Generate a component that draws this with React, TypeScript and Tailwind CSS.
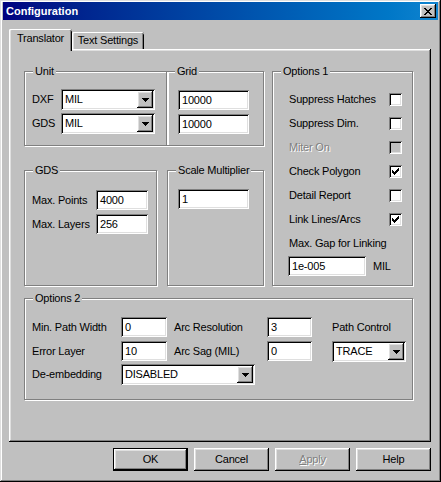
import React from "react";

const RAISED =
  "shadow-[inset_-1px_-1px_0_#000,inset_1px_1px_0_#fff,inset_-2px_-2px_0_#808080,inset_2px_2px_0_#dfdfdf]";
const SUNKEN =
  "shadow-[inset_1px_1px_0_#808080,inset_-1px_-1px_0_#fff,inset_2px_2px_0_#000,inset_-2px_-2px_0_#dfdfdf]";
const DISABLED_TEXT = "text-[#808080] [text-shadow:1px_1px_0_#fff]";

function Pixels({ w, h, rects }: { w: number; h: number; rects: number[][] }) {
  return (
    <svg width={w} height={h} viewBox={`0 0 ${w} ${h}`} shapeRendering="crispEdges" className="block">
      {rects.map((r, i) => (
        <rect key={i} x={r[0]} y={r[1]} width={r[2]} height={r[3]} fill="#000" />
      ))}
    </svg>
  );
}

const Arrow = () => (
  <Pixels w={7} h={4} rects={[[0, 0, 7, 1], [1, 1, 5, 1], [2, 2, 3, 1], [3, 3, 1, 1]]} />
);

const Check = () => (
  <Pixels
    w={7}
    h={7}
    rects={[
      [6, 0, 1, 1],
      [5, 1, 2, 1],
      [0, 2, 1, 1],
      [4, 2, 3, 1],
      [0, 3, 2, 1],
      [3, 3, 3, 1],
      [0, 4, 5, 1],
      [1, 5, 3, 1],
      [2, 6, 1, 1],
    ]}
  />
);

const CloseX = () => (
  <Pixels
    w={8}
    h={7}
    rects={[
      [0, 0, 2, 1],
      [6, 0, 2, 1],
      [1, 1, 2, 1],
      [5, 1, 2, 1],
      [2, 2, 4, 1],
      [3, 3, 2, 1],
      [2, 4, 4, 1],
      [1, 5, 2, 1],
      [5, 5, 2, 1],
      [0, 6, 2, 1],
      [6, 6, 2, 1],
    ]}
  />
);

function Group({
  label,
  className,
  children,
}: {
  label: string;
  className: string;
  children?: React.ReactNode;
}) {
  return (
    <div
      className={`relative border border-[#808080] shadow-[inset_1px_1px_0_#fff,1px_1px_0_#fff] ${className}`}
    >
      <span className="absolute left-[8px] top-[-7px] bg-[#c0c0c0] px-[2px] leading-[13px] whitespace-nowrap">
        {label}
      </span>
      {children}
    </div>
  );
}

function Field({ value, className }: { value: string; className: string }) {
  return (
    <div className={`flex h-[20px] shrink-0 items-center bg-white pl-[4px] ${SUNKEN} ${className}`}>
      {value}
    </div>
  );
}

function Combo({ value, className }: { value: string; className: string }) {
  return (
    <div className={`flex h-[21px] shrink-0 items-stretch bg-white p-[2px] ${SUNKEN} ${className}`}>
      <span className="flex flex-1 items-center pl-[2px]">{value}</span>
      <span className={`flex w-[16px] items-center justify-center bg-[#c0c0c0] ${RAISED}`}>
        <Arrow />
      </span>
    </div>
  );
}

function CheckBox({ checked, disabled }: { checked?: boolean; disabled?: boolean }) {
  return (
    <span
      className={`flex h-[13px] w-[13px] shrink-0 items-center justify-center ${SUNKEN} ${
        disabled ? "bg-[#c0c0c0]" : "bg-white"
      }`}
    >
      {checked && <Check />}
    </span>
  );
}

function Button({
  children,
  isDefault,
}: {
  children: React.ReactNode;
  isDefault?: boolean;
}) {
  return (
    <div
      className={`flex h-[23px] w-[75px] items-center justify-center bg-[#c0c0c0] ${
        isDefault
          ? "shadow-[inset_0_0_0_1px_#000,inset_-2px_-2px_0_#000,inset_2px_2px_0_#fff,inset_-3px_-3px_0_#808080,inset_3px_3px_0_#dfdfdf]"
          : RAISED
      }`}
    >
      {children}
    </div>
  );
}

const options1: { label: string; checked?: boolean; disabled?: boolean }[] = [
  { label: "Suppress Hatches" },
  { label: "Suppress Dim." },
  { label: "Miter On", disabled: true },
  { label: "Check Polygon", checked: true },
  { label: "Detail Report" },
  { label: "Link Lines/Arcs", checked: true },
];

export default function App() {
  return (
    <div className="h-[482px] w-[441px] overflow-hidden bg-[#c0c0c0] px-[3px] pt-[2px] font-['Liberation_Sans',Arial,sans-serif] text-[11px] leading-[13px] tracking-[-0.2px] text-black shadow-[inset_-1px_-1px_0_#000,inset_1px_1px_0_#dfdfdf,inset_-2px_-2px_0_#808080,inset_2px_2px_0_#fff]">
      {/* Title bar */}
      <div className="flex h-[18px] items-center bg-linear-to-r from-[#000080] to-[#1084d0] pl-[3px] pr-[2px]">
        <span className="text-[11px] font-bold tracking-normal text-white">Configuration</span>
        <span className={`ml-auto flex h-[14px] w-[16px] items-center justify-center bg-[#c0c0c0] ${RAISED}`}>
          <CloseX />
        </span>
      </div>

      <div className="pl-[6px]">
        {/* Tabs */}
        <div className="mt-[9px] flex h-[20px] items-end">
          <div className="relative z-10 -mb-[2px] flex h-[22px] w-[63px] justify-center rounded-t-[2px] bg-[#c0c0c0] pt-[3px] shadow-[inset_1px_0_0_#fff,inset_0_1px_0_#fff,inset_-1px_0_0_#000,inset_-2px_0_0_#808080,inset_2px_0_0_#dfdfdf]">
            Translator
          </div>
          <div className="flex h-[17px] w-[72px] justify-center rounded-t-[2px] bg-[#c0c0c0] pt-[2px] shadow-[inset_1px_0_0_#fff,inset_0_1px_0_#fff,inset_-1px_0_0_#000,inset_-2px_0_0_#808080,inset_2px_0_0_#dfdfdf]">
            Text Settings
          </div>
        </div>

        {/* Tab panel */}
        <div className={`h-[393px] w-[422px] bg-[#c0c0c0] pl-[15px] pt-[22px] ${RAISED}`}>
          <div className="flex items-start">
            {/* Left column */}
            <div className="w-[240px]">
              <div className="flex">
                <Group label="Unit" className="h-[75px] w-[144px] pl-[7px] pt-[17px]">
                  <div className="flex h-[21px] items-center">
                    <span className="w-[29px]">DXF</span>
                    <Combo value="MIL" className="w-[94px]" />
                  </div>
                  <div className="mt-[3px] flex h-[21px] items-center">
                    <span className="w-[29px]">GDS</span>
                    <Combo value="MIL" className="w-[94px]" />
                  </div>
                </Group>
                <Group label="Grid" className="-ml-[2px] h-[75px] w-[98px] pl-[11px] pt-[18px]">
                  <Field value="10000" className="w-[71px]" />
                  <Field value="10000" className="mt-[4px] w-[71px]" />
                </Group>
              </div>
              <div className="mt-[24px] flex">
                <Group label="GDS" className="h-[116px] w-[133px] pl-[7px] pt-[19px]">
                  <div className="flex h-[20px] items-center">
                    <span className="w-[64px]">Max. Points</span>
                    <Field value="4000" className="w-[52px]" />
                  </div>
                  <div className="mt-[4px] flex h-[20px] items-center">
                    <span className="w-[64px]">Max. Layers</span>
                    <Field value="256" className="w-[52px]" />
                  </div>
                </Group>
                <Group label="Scale Multiplier" className="ml-[10px] h-[116px] w-[97px] pl-[10px] pt-[18px]">
                  <Field value="1" className="w-[71px]" />
                </Group>
              </div>
            </div>

            {/* Options 1 */}
            <Group label="Options 1" className="ml-[8px] h-[215px] w-[141px] pl-[16px] pt-[15px]">
              {options1.map((o) => (
                <div key={o.label} className="flex h-[24px] items-center">
                  <span className={`w-[100px] ${o.disabled ? DISABLED_TEXT : ""}`}>{o.label}</span>
                  <CheckBox checked={o.checked} disabled={o.disabled} />
                </div>
              ))}
              <div className="mt-[6px]">Max. Gap for Linking</div>
              <div className="mt-[6px] flex items-center">
                <Field value="1e-005" className="-ml-[1px] w-[78px]" />
                <span className="ml-[7px]">MIL</span>
              </div>
            </Group>
          </div>

          {/* Options 2 */}
          <Group label="Options 2" className="mt-[12px] h-[102px] w-[389px] pl-[7px] pt-[18px]">
            <div className="flex h-[20px] items-center">
              <span className="w-[89px]">Min. Path Width</span>
              <Field value="0" className="w-[46px]" />
              <span className="ml-[7px] w-[93px]">Arc Resolution</span>
              <Field value="3" className="w-[45px]" />
              <span className="ml-[20px]">Path Control</span>
            </div>
            <div className="mt-[4px] flex items-start">
              <span className="flex h-[20px] w-[89px] items-center">Error Layer</span>
              <Field value="10" className="w-[46px]" />
              <span className="ml-[7px] flex h-[20px] w-[93px] items-center">Arc Sag (MIL)</span>
              <Field value="0" className="w-[45px]" />
              <Combo value="TRACE" className="ml-[20px] w-[74px]" />
            </div>
            <div className="mt-[2px] flex h-[21px] items-center">
              <span className="w-[89px]">De-embedding</span>
              <Combo value="DISABLED" className="w-[134px]" />
            </div>
          </Group>
        </div>

        {/* Buttons */}
        <div className="mt-[6px] flex w-[422px] justify-end gap-[6px]">
          <Button isDefault>OK</Button>
          <Button>Cancel</Button>
          <Button>
            <span className={DISABLED_TEXT}>
              <u>A</u>pply
            </span>
          </Button>
          <Button>Help</Button>
        </div>
      </div>
    </div>
  );
}
